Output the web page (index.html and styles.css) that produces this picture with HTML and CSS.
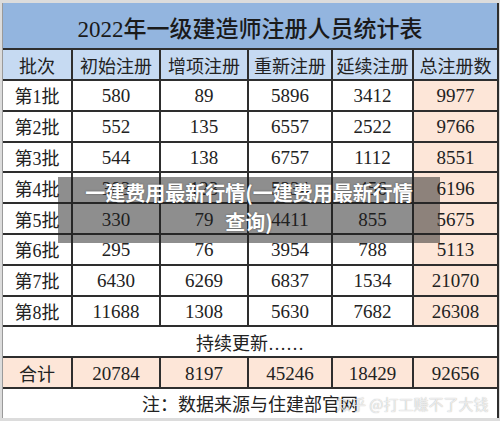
FILE: index.html
```html
<!DOCTYPE html>
<html lang="zh-CN">
<head>
    <meta charset="UTF-8">
    <meta name="viewport" content="width=device-width, initial-scale=1.0">
    <title>2022年一级建造师注册人员统计表</title>
    <link rel="stylesheet" href="styles.css">
</head>
<body>
    <div class="frame">
        <!-- Table -->
        <div class="sheet">
            <div class="cell title">2022年一级建造师注册人员统计表</div>

            <div class="cell head">批次</div>
            <div class="cell head">初始注册</div>
            <div class="cell head">增项注册</div>
            <div class="cell head">重新注册</div>
            <div class="cell head">延续注册</div>
            <div class="cell head">总注册数</div>

            <div class="cell">第1批</div><div class="cell num">580</div><div class="cell num">89</div><div class="cell num">5896</div><div class="cell num">3412</div><div class="cell num total">9977</div>
            <div class="cell">第2批</div><div class="cell num">552</div><div class="cell num">135</div><div class="cell num">6557</div><div class="cell num">2522</div><div class="cell num total">9766</div>
            <div class="cell">第3批</div><div class="cell num">544</div><div class="cell num">138</div><div class="cell num">6757</div><div class="cell num">1112</div><div class="cell num total">8551</div>
            <div class="cell">第4批</div><div class="cell num">383</div><div class="cell num">123</div><div class="cell num">5234</div><div class="cell num">456</div><div class="cell num total">6196</div>
            <div class="cell">第5批</div><div class="cell num">330</div><div class="cell num">79</div><div class="cell num">4411</div><div class="cell num">855</div><div class="cell num total">5675</div>
            <div class="cell">第6批</div><div class="cell num">295</div><div class="cell num">76</div><div class="cell num">3954</div><div class="cell num">788</div><div class="cell num total">5113</div>
            <div class="cell">第7批</div><div class="cell num">6430</div><div class="cell num">6269</div><div class="cell num">6837</div><div class="cell num">1534</div><div class="cell num total">21070</div>
            <div class="cell">第8批</div><div class="cell num">11688</div><div class="cell num">1308</div><div class="cell num">5630</div><div class="cell num">7682</div><div class="cell num total">26308</div>

            <div class="cell wide">持续更新……</div>

            <div class="cell total">合计</div><div class="cell num total">20784</div><div class="cell num total">8197</div><div class="cell num total">45246</div><div class="cell num total">18429</div><div class="cell num total">92656</div>

            <div class="cell wide">注：数据来源与住建部官网</div>
        </div>

        <!-- Caption over the picture -->
        <div class="caption">一建费用最新行情(一建费用最新行情<br>查询)</div>

        <div class="watermark">知乎 @打工赚不了大钱</div>
    </div>
</body>
</html>
```

FILE: styles.css
```css
body {
    margin: 0;
    padding: 0;
    background-color: #dcdcdc;
    font-family: 'Liberation Serif', 'Noto Sans CJK SC', serif;
    color: #222;
}

.frame {
    position: relative;
    width: 500px;
    height: 421px;
    overflow: hidden;
}

/* Table */
.sheet {
    display: grid;
    grid-template-columns: 68px 86px 86px 82px 79px 83px;
    grid-template-rows: 45px 29px repeat(11, 28.8px);
    gap: 2px;
    width: fit-content;
    margin: 3px 0 0 2px;
    padding-right: 2px;
    background-color: #2e2e2e;
    border-left: 1px solid #9a9a9a;
}

.cell {
    display: flex;
    align-items: center;
    justify-content: center;
    background: #fff;
    font-size: 18px;
    white-space: nowrap;
}

.cell.num {
    font-size: 19px;
    padding-top: 2px;
}

.title {
    grid-column: 1 / -1;
    background-color: #93b5df;
    font-size: 23px;
    font-weight: 500;
    color: #1a1a1a;
    padding-top: 2px;
}

.head {
    background-color: #c6daf2;
}

.total {
    background-color: #fde6d8;
}

.wide {
    grid-column: 1 / -1;
}

/* Overlay caption */
.caption {
    position: absolute;
    left: 58px;
    top: 177px;
    width: 382px;
    height: 66px;
    box-sizing: border-box;
    padding-top: 1px;
    background: rgba(30, 30, 30, 0.5);
    color: #fff;
    font-family: 'Noto Sans CJK SC', sans-serif;
    font-weight: 700;
    font-size: 20px;
    line-height: 29px;
    text-align: center;
    text-shadow: 0 0 2px rgba(0, 0, 0, 0.4);
}

.watermark {
    position: absolute;
    left: 336px;
    top: 393px;
    font-family: 'Noto Sans CJK SC', sans-serif;
    font-size: 15px;
    color: rgba(255, 255, 255, 0.75);
    text-shadow: 0 0 1px rgba(0, 0, 0, 0.35);
}
```
